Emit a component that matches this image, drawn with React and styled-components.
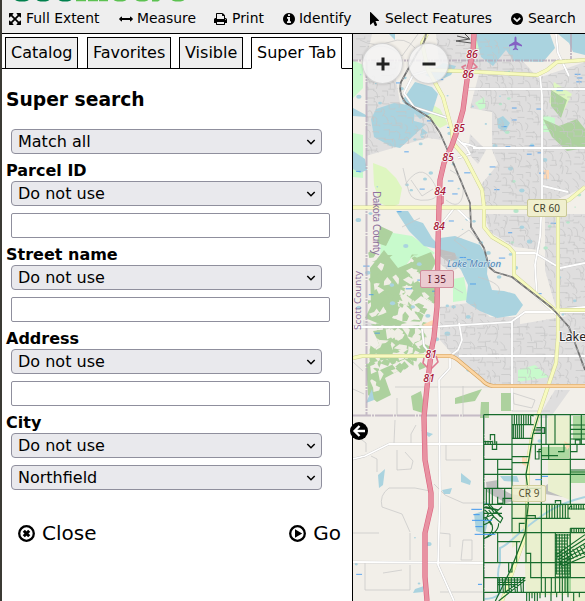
import React from "react";
import styled, { createGlobalStyle } from "styled-components";

const Global = createGlobalStyle`
  html, body { margin: 0; height: 100%; overflow: hidden; background: #fff; }
  * { box-sizing: border-box; }
`;
const Page = styled.div`
  width: 585px;
  height: 601px;
  display: flex;
  flex-direction: column;
  border-left: 2px solid #3b3a34;
  background: #fff;
  color: #000;
  font-family: "DejaVu Sans", sans-serif;
  font-size: 16px;
  overflow: hidden;
`;
const Header = styled.header`
  height: 34px;
  flex: none;
  background: #eee;
  border-bottom: 1px solid #000;
`;
const LogoStrip = styled.svg`
  display: block;
  width: 200px;
  height: 4px;
`;
const Toolbar = styled.nav`
  display: grid;
  grid-template-columns: 110px 95px 69px 87px 141px 74px;
  padding-left: 7px;
  height: 28px;
  align-items: center;
  font-size: 13.9px;
`;
const Tool = styled.span`
  display: grid;
  grid-template-columns: ${(p) => p.$slot}px auto;
  align-items: center;
  justify-content: start;
  white-space: nowrap;
  svg { display: block; position: relative; top: 1px; }
`;
const Body = styled.div`
  flex: 1;
  display: flex;
  min-height: 0;
`;
const Panel = styled.aside`
  width: 351px;
  flex: none;
  border-right: 1px solid #000;
`;
const Tabs = styled.div`
  height: 35px;
  display: grid;
  grid-template-columns: 3px 73px 9px 84px 8px 64px 8px 91px 1fr;
  align-items: end;
`;
const Rule = styled.span`
  height: 1px;
  background: #000;
`;
const Tab = styled.span`
  height: 32px;
  border: 1px solid #000;
  border-bottom-color: ${(p) => (p.$active ? "#fff" : "#000")};
  background: ${(p) => (p.$active ? "#fff" : "#eee")};
  padding-left: 5px;
  line-height: 29px;
  white-space: nowrap;
`;
const Title = styled.h3`
  margin: 0;
  height: 60px;
  padding-left: 4px;
  font-size: 18.72px;
  line-height: 62px;
`;
const Label = styled.div`
  height: 27px;
  padding: 3px 0 0 4px;
  font-weight: bold;
  line-height: 27px;
`;
const Select = styled.div`
  width: 311px;
  height: 25px;
  margin: 0 0 ${(p) => (p.$gap ? 7 : 0)}px 9px;
  padding: 0 5px 0 6px;
  display: flex;
  align-items: center;
  justify-content: space-between;
  border: 1px solid #8f8f9d;
  border-radius: 4px;
  background: #e9e9ed;
  line-height: 22px;
`;
const Input = styled.input`
  display: block;
  width: 319px;
  height: 25px;
  margin: 0 0 0 9px;
  border: 1px solid #8f8f9d;
  border-radius: 2px;
  background: #fff;
  outline: none;
`;
const Actions = styled.div`
  margin-top: 30px;
  height: 26px;
  padding: 0 11px 0 16px;
  display: flex;
  justify-content: space-between;
  font-size: 20px;
`;
const Action = styled.span`
  display: flex;
  align-items: center;
  gap: 7px;
`;
const MapArea = styled.main`
  position: relative;
  width: 232px;
  height: 567px;
`;
const MapSvg = styled.svg`
  display: block;
  width: 232px;
  height: 567px;
`;
const ZoomButton = styled.button`
  position: absolute;
  left: ${(p) => p.$x}px;
  top: 9px;
  width: 41px;
  height: 41px;
  padding: 0;
  display: grid;
  place-items: center;
  border: 1px solid rgba(190, 190, 190, 0.6);
  border-radius: 50%;
  background: rgba(244, 244, 244, 0.87);
  box-shadow: 0 0 3px rgba(0, 0, 0, 0.2);
`;
const Collapse = styled.span`
  position: absolute;
  left: -3px;
  top: 388px;
  svg { display: block; }
`;

const paths = {
  extent: ["128 128 1536 1536", 12, 12, "M1411 541l-355 355 355 355 144-144q29-31 70-14 39 17 39 59v448q0 26-19 45t-45 19h-448q-42 0-59-40-17-39 14-69l144-144-355-355-355 355 144 144q31 30 14 69-17 40-59 40h-448q-26 0-45-19t-19-45v-448q0-42 40-59 39-17 69 14l144 144 355-355-355-355-144 144q-19 19-45 19-12 0-24-5-40-17-40-59v-448q0-26 19-45t45-19h448q42 0 59 40 17 39-14 69l-144 144 355 355 355-355-144-144q-31-30-14-69 17-40 59-40h448q26 0 45 19t19 45v448q0 42-39 59-13 5-25 5-26 0-45-19z"],
  measure: ["0 0 1792 1792", 14, 14, "M1792 896q0 26-19 45l-256 256q-19 19-45 19t-45-19-19-45v-128h-1024v128q0 26-19 45t-45 19-45-19l-256-256q-19-19-19-45t19-45l256-256q19-19 45-19t45 19 19 45v128h1024v-128q0-26 19-45t45-19 45 19l256 256q19 19 19 45z"],
  print: ["64 128 1664 1536", 13, 12, "M448 1536h896v-256h-896v256zm0-640h896v-384h-160q-40 0-68-28t-28-68v-160h-640v640zm1152 64q0-26-19-45t-45-19-45 19-19 45 19 45 45 19 45-19 19-45zm128 0v416q0 13-9.5 22.5t-22.5 9.5h-224v160q0 40-28 68t-68 28h-960q-40 0-68-28t-28-68v-160h-224q-13 0-22.5-9.5t-9.5-22.5v-416q0-79 56.5-135.5t135.5-56.5h64v-544q0-40 28-68t68-28h672q40 0 88 20t76 48l152 152q28 28 48 76t20 88v256h64q79 0 135.5 56.5t56.5 135.5z"],
  info: ["128 128 1536 1536", 12, 12, "M1152 1376v-160q0-14-9-23t-23-9h-96v-512q0-14-9-23t-23-9h-320q-14 0-23 9t-9 23v160q0 14 9 23t23 9h96v320h-96q-14 0-23 9t-9 23v160q0 14 9 23t23 9h448q14 0 23-9t9-23zm-128-896v-160q0-14-9-23t-23-9h-192q-14 0-23 9t-9 23v160q0 14 9 23t23 9h192q14 0 23-9t9-23zm640 416q0 209-103 385.5t-279.5 279.5-385.5 103-385.5-103-279.5-279.5-103-385.5 103-385.5 279.5-279.5 385.5-103 385.5 103 279.5 279.5 103 385.5z"],
  pointer: ["256 0 1152 1792", 9, 14, "M1389 1043q31 30 14 69-17 40-59 40h-382l201 476q10 25 0 49t-34 35l-177 75q-25 10-49 0t-35-34l-191-452-312 312q-19 19-45 19-12 0-24-5-40-17-40-59v-1504q0-42 40-59 12-5 24-5 27 0 45 19z"],
};
const Icon = ({ name }) => {
  const [vb, w, h, d] = paths[name];
  return <svg width={w} height={h} viewBox={vb}><path d={d} /></svg>;
};
const ChevronCircle = () => (
  <svg width="12" height="12" viewBox="0 0 12 12">
    <circle cx="6" cy="6" r="6" />
    <path d="M2.8 5l3.2 3.1L9.2 5" fill="none" stroke="#eee" strokeWidth="1.8" />
  </svg>
);
const Caret = () => (
  <svg width="10" height="8" viewBox="0 0 10 8">
    <path d="M1.3 2l3.7 3.7L8.7 2" fill="none" stroke="#000" strokeWidth="1.5" />
  </svg>
);
const CloseIcon = () => (
  <svg width="17" height="17" viewBox="0 0 17 17">
    <circle cx="8.5" cy="8.5" r="7.3" fill="none" stroke="#000" strokeWidth="2.3" />
    <path d="M5.8 5.8l5.4 5.4M11.2 5.8l-5.4 5.4" stroke="#000" strokeWidth="3" />
  </svg>
);
const GoIcon = () => (
  <svg width="17" height="17" viewBox="0 0 17 17">
    <circle cx="8.5" cy="8.5" r="7.3" fill="none" stroke="#000" strokeWidth="2.3" />
    <path d="M6 4.3v8.4l7.2-4.2z" />
  </svg>
);

/* Map geometry, in window coordinates */
const residential = [
  "M366 62L400 62 396 80 400 103 430 120 442 140 428 138 410 143 366 156Z",
  "M436 34H500L520 58 538 78 585 62V187L540 207H484L480 186 498 164 492 150 492 112 470 108 480 70 440 70Z",
  "M484 214L542 214 540 250 515 247 490 232ZM545 214H585V330L556 308 545 270Z",
  "M440 307L475 302 490 317H520V384H487L455 357 440 340Z",
  "M515 325L585 313V385H515ZM353 34H372L366 60H353ZM555 390L570 390 550 418 538 418Z",
  "M438 255L458 253 470 262 450 272 438 262ZM470 134L486 150 478 164 468 153ZM363 320L385 328 363 326Z",
];
const woods = [
  "M370 268L384 250 398 268 412 262 420 275 436 270 436 305 421 296 409 306 400 303 392 318 407 323 387 327 365 318 371 306Z",
  "M380 226L393 232 386 246 377 243ZM400 280L416 258 431 252 436 262 421 292 405 299Z",
  "M373 331L419 325 427 337 412 345 420 353 402 360 383 355 377 339Z",
  "M366 364L387 359 398 371 385 378 391 395 377 402 368 395ZM371 374L405 359 392 352 382 343 369 354Z",
  "M411 396L421 391 426 414 413 410ZM455 398L482 389 475 401 455 404ZM481 402H489V418H480ZM501 393H511V411H501Z",
  "M543 119L559 126 577 119 585 129V148L567 151 552 137ZM551 90L567 100 561 118 551 106Z",
];
const lakes = [
  "M376 109L394 103 415 106 414 121 426 124 410 139 400 148 390 146 374 137 371 119Z",
  "M402 101L415 82 432 87 438 94 432 113 420 119Z",
  "M396 211L408 211 414 220 423 223 432 238 437 243 440 238 455 236 480 245 488 258 487 274 492 290 504 291 515 294 523 305 516 315 497 318 480 311 466 302 468 285 461 270 451 258 438 249 424 246 409 231Z",
  "M475 34H550L555 48 543 62 514 61 506 50 493 66 481 57Z",
  "M558 34H585V55L573 52 569 43ZM443 63L456 66 451 75 438 81 425 75Z",
  "M353 108L366 115V117L353 116ZM353 151L365 159 367 170 360 173 353 169Z",
  "M497 119L503 116 510 123 505 132 498 128ZM389 34H395V40ZM422 128L428 133 420 136Z",
];
const greens = [
  "M353 60L363 65 363 88 353 98ZM353 133L363 135V178L353 177ZM381 231L412 236 435 253 421 263 412 257 401 272 403 284 380 263Z",
  "M453 279L464 277 468 300 453 302ZM475 103L484 97 486 107 480 110ZM518 370L535 365 549 377 518 382Z",
  "M477 34H491L481 53 475 48ZM543 115L555 118 554 132H543Z",
];
const roads = {
  white: [
    "M467 89H585M473 148H585M540 76L542 95V200L540 237 535 265 537 297 557 315",
    "M353 327H430L511 322 525 312H585M512 322V410M459 356H585",
    "M459 323L462 340 458 350 450 356 450 368 439 380 440 490 438 565 454 601",
    "M353 459L365 456 389 444H484M353 562L484 563M556 34L558 53 569 76",
    "M430 70L413 75 404 93 414 107 448 118M433 357L424 346 422 329M437 307V325",
    "M455 137L466 147 470 154 458 158M440 226L455 207 472 223M514 253H535L560 268 585 263M543 186L568 192",
    "M465 86L466 100 457 137M461 143L470 145 480 149M557 311L566 309 585 307",
  ],
  yellow: [
    "M427 34L422 43 428 70 443 97 452 130 453 143 465 157 482 190 484 207V227L492 237 509 247 514 253V275L555 310H585",
    "M427 70L460 71 537 75 547 70 557 62 585 60M353 207.5H550L569 200 585 187",
    "M558 213V337L556 363 539 413 532 437 528 460 527 510 525 537 502 601M353 358L362 356H436",
  ],
};
const rail = "M426 34Q425 44 417 53L401 82Q398 94 406 103L430 118 440 133 455 167 470 203 471 227 484 248 489 267 495 272 512 277 552 308 569 327 585 370";
const freeway = "M474 34L473 53 468 73 465 95 463 110 458 128 452 145 444 163 440 180 439 207 438 243 437 307 434 337 432 347 427 387 424 417 425 460 431 493V507L425 533V577L427 601";
const lanes =
  "M395 420L394 443M397 450V470L411 469 413 461 405 452M416 425L411 434V443M371 456L377 459V472M358 427V437L366 443V452M410 533V560M430 491L415 488H389Q379 495 382 507L402 514 410 532M353 533H379M434 484L445 495 463 503H484M446 444V460L471 460M440 533L450 534V547M463 540H472V560H461ZM365 563V590H410V565M383 573L402 570M440 592H484M395 387H512V411H550M463 386V417M397 398V416M513 393L535 400 532 408 514 404ZM353 362L363 371M353 389L364 394";

/* Short residential streets, laid out from a fixed seed */
const streets = (() => {
  let s = 17;
  const r = () => (s = (s * 16807) % 2147483647) / 2147483647;
  let d = "";
  for (let y = 38; y < 390; y += 7)
    for (let x = 356; x < 585; x += 8) {
      const a = x + r() * 4, b = y + r() * 4;
      d += `M${a.toFixed(1)} ${b.toFixed(1)}`;
      d += r() > 0.45 ? `h${(4 + r() * 6).toFixed(1)}v${(r() * 9 - 3).toFixed(1)}` : `q5 ${(r() * 8 - 4).toFixed(1)} ${(r() * 6).toFixed(1)} 8`;
    }
  return d;
})();
const specks = (() => {
  let s = 91;
  const r = () => (s = (s * 16807) % 2147483647) / 2147483647;
  return Array.from({ length: 135 }, (_, i) => ({ x: 356 + r() * 225, y: 70 + r() * (i % 4 ? 250 : 520), w: 1 + r() * 2.5, t: i % 3 }));
})();

/* Clearings inside the woods and stray thickets around them */
const patches = (() => {
  let s = 4021;
  const r = () => (s = (s * 16807) % 2147483647) / 2147483647;
  const blob = (x, y, k) => `M${x.toFixed(1)} ${y.toFixed(1)}l${(k * r()).toFixed(1)} ${(-k * r()).toFixed(1)} ${(k * (0.5 + r())).toFixed(1)} ${(k * r()).toFixed(1)} ${(-k * r() * 0.6).toFixed(1)} ${(k * r()).toFixed(1)} ${(-k * r()).toFixed(1)} ${(k * r() * 0.5).toFixed(1)}z`;
  let clear = "", thicket = "";
  for (let i = 0; i < 75; i++) clear += blob(368 + r() * 66, 262 + r() * 130, 6);
  for (let i = 0; i < 95; i++) thicket += blob(368 + r() * 55, 250 + r() * 120, 5);
  return { clear, thicket };
})();

/* Parcel outlines, in thirds of a pixel from (352, 410) */
const parcels = (() => {
  let d = "M395 14H699M395 14V573M395 103H699M395 148H480M568 148H699M395 193H699M395 235H568M395 283H699M395 368H699M395 458H699M395 503H520M395 547H699M480 14V368M568 14V503M655 14V283M480 44H545M480 85H540M480 140H530M480 158H530M437 148V235M437 178H480M458 235V283M437 368V458M437 395H505M494 395V458M480 325H655M522 283V458M522 430H536V458M522 317H550V325M502 368V340H518M655 180H699M655 186H699M655 45H699M655 58H699M655 72H699M655 87H699M568 137H618M590 103V148M545 60H568M545 70H578V53H553M655 355V368M655 355H699M610 368V547M655 368V503M655 503H699M568 547V503H655M536 458V503H568M580 503V547M598 503V547M437 503V547M437 510H505M437 517H495M437 524H490M480 458V486H470V458M415 90V74H428V100M421 103V118H434V94M618 125H636V103M655 125H675V103M437 260V280H453V265H480M550 103V147H561V118H568M568 125H554M610 280V272H626V283M670 103V90H684V103M395 95H420M582 14V103M609 14V103M688 14V103M395 325L420 315 445 338 452 324 430 300 395 292M395 345L415 335Q435 365 395 386M410 300L425 318M408 283L428 310 450 290M415 285L445 320M395 310L450 310M398 300L410 310 400 330M395 386Q440 370 440 340M405 325L418 345M425 320L412 335M400 290L440 300M660 283L650 297H699M530 14L545 18 M520 503L455 550M520 510L440 573";
  for (let x = 487; x < 538; x += 7) d += `M${x} 14v30`;
  for (let x = 484; x < 520; x += 6) d += `M${x} 44v41`;
  for (let x = 401; x < 432; x += 7) d += `M${x} 92v11`;
  for (let x = 403; x < 430; x += 9) d += `M${x} 235v48`;
  for (let x = 584; x < 654; x += 8) d += `M${x} 283v42`;
  for (let x = 659; x < 699; x += 7) d += `M${x} 283v16M${x} 355v13`;
  for (let x = 442; x < 520; x += 9) d += `M${x} 503l${x % 2 ? 3 : 0} 44`;
  for (let x = 623; x < 653; x += 8) d += `M${x} 458v89`;
  for (let y = 375; y < 503; y += 9) d += `M610 ${y}h${y < 440 ? 45 - (y - 370) / 3 : 44}`;
  for (let x = 614; x < 655; x += 8) d += `M${x} 372v${120}`;
  for (let i = 0; i < 6; i++) d += `M${612 + i * 3} ${435 + i * 7}L699 ${374 + i * 13}M${640 + i * 11} ${425 - i * 4}l14 25`;
  for (let x = 524; x < 568; x += 8) d += `M${x} 547v${x % 3 ? 26 : 18}`;
  for (let x = 580; x < 699; x += 17) d += `M${x} 547v${x % 2 ? 26 : 15}`;
  return d;
})();

const exits = [[472, 58, 86], [468, 78, 86], [459, 132, 85], [448, 161, 85], [440, 195, 84], [439, 230, 84], [431, 358, 81], [429, 382, 81]];

const MapView = () => (
  <MapSvg viewBox="353 34 232 567" fontFamily='"Noto Sans", sans-serif'>
    <defs>
      <clipPath id="town">{residential.map((d) => <path key={d} d={d} />)}</clipPath>
      <clipPath id="woods">{woods.slice(0, 4).map((d) => <path key={d} d={d} />)}</clipPath>
    </defs>
    <rect x="353" y="34" width="232" height="567" fill="#f2efe9" />
    <g fill="#dfdede">{residential.map((d) => <path key={d} d={d} />)}</g>
    <g fill="#c8facc">{greens.map((d) => <path key={d} d={d} />)}</g>
    <path d="M373 163L386 168 396 178 402 188 399 204 390 208 380 203 374 185ZM415 95L440 109 448 124 440 128 421 113ZM554 82L572 94 561 116 549 102Z" fill="#def6c0" />
    <g fill="#add19e">{woods.map((d) => <path key={d} d={d} />)}</g>
    <path d={patches.thicket} fill="#add19e" />
    <path d={patches.clear} fill="#f0eee5" clipPath="url(#woods)" />
    <g fill="#aad3df">
      {lakes.map((d) => <path key={d} d={d} />)}
      <path d="M378 475L385 469 383 485 379 488ZM461 473L471 481 470 485 461 482ZM442 490L452 488 450 494 444 494ZM474 514L483 511 488 522 485 534 476 531ZM500 476L517 476 519 482 504 481ZM372 389L374 400 366 403ZM421 430L433 434 429 437ZM415 589L424 586 423 592 413 593Z" />
    </g>
    <path d="M438 34H465V50L455 60 445 55 437 45Z" fill="#e0dfdf" />
    <path d="M545 486L555 479 570 477V498L545 494ZM486 482L498 480 498 487 511 494 530 497 506 503 487 492ZM439 249L455 253 457 259 448 262 440 256ZM536 428H545V434H535Z" fill="#bfbfbf" />
    <path d="M548 416H570V500L548 491ZM512 505H570V595H526L524 540 512 548ZM570 505H585V601H570Z" fill="#eaf0cf" />
    <path d="M541 447H569V458H541ZM570 471H585V483H570ZM565 565H571V592H565ZM573 416H585V440H573Z" fill="#acd9a0" />
    <path d="M522 456L530 461 528 467 522 464ZM564 441L571 445 567 450ZM422 325L433 320 433 329ZM544 170H549V179H544Z" fill="#ffd8b5" />
    {specks.map((p, i) => p.t === 0
      ? <path key={i} d={`M${p.x} ${p.y}h${3 + p.w}`} stroke="#3f97ee" strokeWidth=".8" />
      : <ellipse key={i} cx={p.x} cy={p.y} rx={p.w * 0.8} ry={p.w * 0.6} fill={p.t === 1 ? "#aad3df" : p.x > 490 && p.y < 400 ? "#b6e6cb" : "#aad3df"} />)}
    <path d="M585 497Q560 503 543 515T515 537 500 548V563Q496 574 500 586T484 599" fill="none" stroke="#aad3df" strokeWidth="2" />
    <g fill="none" stroke="#c6c6c6" strokeWidth=".7">
      <path d={streets} clipPath="url(#town)" />
      <path d={lanes} />
      <path d="M360 40Q375 48 390 42T415 48M368 51Q382 39 402 56L418 34M405 185Q420 162 432 180T428 200 409 192 403 168M450 170Q466 177 463 194T446 200M411 180L422 196 433 189M478 277Q505 284 498 294M451 286L463 293M402 227L420 218M467 250L454 240 469 230 479 241" />
    </g>
    <g fill="none" stroke="#b6a9b9" strokeWidth="2" opacity=".75">
      <path d="M353 60.5H585" strokeDasharray="5 1 2 1" />
      <path d="M366.5 60V416M353 415.5H484M484 416V601M571 34V60" strokeDasharray="18 1 2 1" />
    </g>
    <g fill="none" strokeLinejoin="round">
      {roads.white.map((d) => <path key={d} d={d} stroke="#c5c5c5" strokeWidth="2.4" />)}
      {roads.white.map((d) => <path key={d} d={d} stroke="#fff" strokeWidth="1.8" />)}
      {roads.yellow.map((d) => <path key={d} d={d} stroke="#cbcf92" strokeWidth="3.9" />)}
      {roads.yellow.map((d) => <path key={d} d={d} stroke="#f7fabf" strokeWidth="3.1" />)}
      <path d="M436 356H449Q453 356 458 360L482 380Q486 385 493 386H585" stroke="#d2a05c" strokeWidth="4" />
      <path d="M436 356H449Q453 356 458 360L482 380Q486 385 493 386H585" stroke="#fcd6a4" strokeWidth="2.8" />
      <path d={rail} stroke="#707070" strokeWidth="1.7" />
      <path d={rail} stroke="#ccc" strokeWidth=".6" strokeDasharray="4 4" />
      <path d="M424 358L423 363 430 370 438 362 436 356M466 65L462 67 467 72 477 67 472 62M443 193V203L437 207" stroke="#de7b91" strokeWidth="1.6" />
      <path d={freeway} stroke="#dc617e" strokeWidth="5.3" />
      <path d={freeway} stroke="#e892a2" strokeWidth="4.1" />
      <path d="M457 36L470 39 456 41 471 43M465 34L469 38" stroke="#555" strokeWidth="1" />
    </g>
    <g transform="translate(352 410) scale(.33333)">
      <path d={parcels} fill="none" stroke="#176b2c" strokeWidth="3.4" />
      <path d="M560 14L542 75 532 140 522 193 527 235 529 283 519 370 478 475 430 573" fill="none" stroke="#176b2c" strokeWidth="3.6" />
      <path d="M358 298H390M364 314H383M360 331H420M370 350H392M368 373H430M378 523H390M570 199H588M550 209H570" stroke="#3f97ee" strokeWidth="3" />
    </g>
    <path d="M515.5 36.5q1 0 1 2v3l5.5 3.5v1.6l-5.5-1.6v3l1.6 1.3v1l-2.6-.7-2.6.7v-1l1.6-1.3v-3l-5.5 1.6v-1.6l5.5-3.5v-3q0-2 1-2z" fill="#8461c4" />
    <g stroke="#f5f5f5" strokeWidth="2" paintOrder="stroke" strokeLinejoin="round">
      {exits.map(([x, y, t]) => <text key={`${x}-${y}`} x={x} y={y} fill="#a81434" fontStyle="italic" fontWeight="500" fontSize="10.5" textAnchor="middle">{t}</text>)}
      <text x="559" y="340.5" fontSize="12.5" fill="#222">Lake</text>
    </g>
    <text x="447" y="267" fontSize="9.6" fontStyle="italic" fill="#4e83b4" textLength="54" stroke="#d9eaf0" strokeWidth="1" paintOrder="stroke">Lake Marion</text>
    <g fill="#8e709c">
      <text transform="translate(372.5 191) rotate(90)" fontSize="10" textLength="64">Dakota County</text>
      <text transform="translate(361 330) rotate(-90)" fontSize="9" textLength="59" lengthAdjust="spacingAndGlyphs">Scott County</text>
    </g>
    <g strokeWidth="1">
      <rect x="527.5" y="199.5" width="39" height="17" rx="1.5" fill="#f0efce" stroke="#c9c896" />
      <rect x="420.5" y="270.5" width="33" height="17" rx="1.5" fill="#eccbd1" stroke="#cf8e9c" />
      <rect x="512.5" y="485.5" width="33" height="16" rx="1.5" fill="#f0efce" fillOpacity=".85" stroke="#d2ce9e" />
    </g>
    <g fontSize="10" textAnchor="middle">
      <text x="546.5" y="212" fill="#40402c" textLength="27">CR 60</text>
      <text x="437" y="283" fill="#641c32" textLength="18">I 35</text>
      <text x="529" y="497" fill="#555130" textLength="21">CR 9</text>
    </g>
  </MapSvg>
);

const Group = ({ label }) => (
  <>
    <Label>{label}</Label>
    <Select $gap>Do not use<Caret /></Select>
  </>
);

export default function App() {
  return (
    <Page>
      <Global />
      <Header>
        <LogoStrip viewBox="2 0 200 4">
          <g fill="#00804d"><ellipse cx="22" cy="-.6" rx="7" ry="2.2" /><ellipse cx="43" cy="-.6" rx="6.5" ry="2.2" /><ellipse cx="65" cy="-.6" rx="6.5" ry="2.2" /></g>
          <g fill="#5cc151"><path d="M76 0h10v1.2H76zM88 0h10v1.2H88zM99 0h9v1.2h-9zM152 0h8l-2 1.4h-6z" /><ellipse cx="120" cy="-.6" rx="6.5" ry="2.2" /><ellipse cx="142" cy="-.6" rx="6.5" ry="2.2" /><ellipse cx="178" cy="-.6" rx="6.5" ry="2.2" /></g>
        </LogoStrip>
        <Toolbar>
          <Tool $slot={17}><Icon name="extent" />Full Extent</Tool>
          <Tool $slot={18}><Icon name="measure" />Measure</Tool>
          <Tool $slot={18}><Icon name="print" />Print</Tool>
          <Tool $slot={16}><Icon name="info" />Identify</Tool>
          <Tool $slot={15}><Icon name="pointer" />Select Features</Tool>
          <Tool $slot={17}><ChevronCircle />Search</Tool>
        </Toolbar>
      </Header>
      <Body>
        <Panel>
          <Tabs>
            <Rule /><Tab>Catalog</Tab><Rule /><Tab>Favorites</Tab><Rule /><Tab>Visible</Tab><Rule /><Tab $active>Super Tab</Tab><Rule />
          </Tabs>
          <Title>Super search</Title>
          <Select>Match all<Caret /></Select>
          <Group label="Parcel ID" /><Input />
          <Group label="Street name" /><Input />
          <Group label="Address" /><Input />
          <Group label="City" />
          <Select>Northfield<Caret /></Select>
          <Actions>
            <Action><CloseIcon />Close</Action>
            <Action><GoIcon />Go</Action>
          </Actions>
        </Panel>
        <MapArea>
          <MapView />
          <ZoomButton $x={9}><svg width="14" height="14" viewBox="0 0 14 14"><path d="M7 .5v13M.5 7h13" stroke="#222" strokeWidth="3" /></svg></ZoomButton>
          <ZoomButton $x={55}><svg width="14" height="14" viewBox="0 0 14 14"><path d="M.5 7h13" stroke="#222" strokeWidth="3" /></svg></ZoomButton>
          <Collapse>
            <svg width="18" height="18" viewBox="0 0 18 18"><circle cx="9" cy="9" r="9" /><path d="M9.5 4L4.5 9l5 5M5 9h10" fill="none" stroke="#fff" strokeWidth="2.3" /></svg>
          </Collapse>
        </MapArea>
      </Body>
    </Page>
  );
}
